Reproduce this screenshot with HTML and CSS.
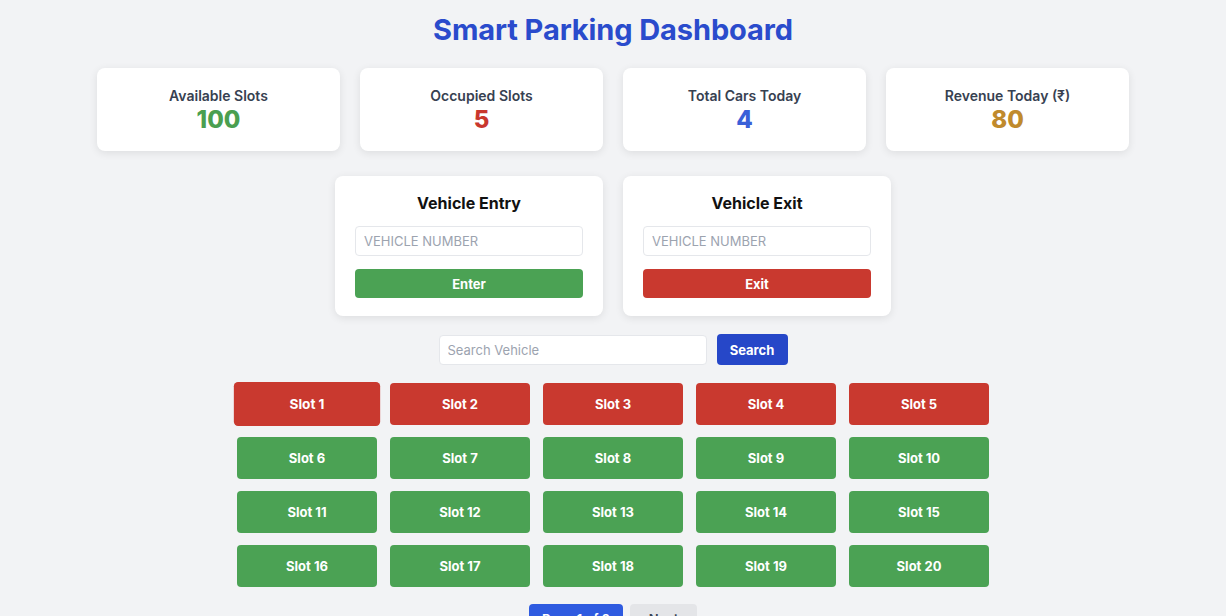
FILE: index.html
```html
<!DOCTYPE html>
<html>
<head>
    <meta name="viewport" charset="utf-8" content="width=device-width, initial-scale=1">
    <title>Smart Parking Dashboard</title>
    <link rel="stylesheet" href="styles.css">
</head>
<body>
<div class="page">
    <h1 class="title">Smart Parking Dashboard</h1>

    <div class="stats">
        <div class="card stat">
            <div class="stat-label">Available Slots</div>
            <div class="stat-value green">100</div>
        </div>
        <div class="card stat">
            <div class="stat-label">Occupied Slots</div>
            <div class="stat-value red">5</div>
        </div>
        <div class="card stat">
            <div class="stat-label">Total Cars Today</div>
            <div class="stat-value blue">4</div>
        </div>
        <div class="card stat">
            <div class="stat-label">Revenue Today (₹)</div>
            <div class="stat-value amber">80</div>
        </div>
    </div>

    <div class="forms">
        <div class="card form">
            <h2 class="form-title">Vehicle Entry</h2>
            <input class="field" type="text" placeholder="VEHICLE NUMBER">
            <button class="btn btn-green">Enter</button>
        </div>
        <div class="card form">
            <h2 class="form-title">Vehicle Exit</h2>
            <input class="field" type="text" placeholder="VEHICLE NUMBER">
            <button class="btn btn-red">Exit</button>
        </div>
    </div>

    <div class="search">
        <input class="field search-field" type="text" placeholder="Search Vehicle">
        <button class="btn btn-blue">Search</button>
    </div>

    <div class="slots">
        <div class="slot occupied hovered">Slot 1</div>
        <div class="slot occupied">Slot 2</div>
        <div class="slot occupied">Slot 3</div>
        <div class="slot occupied">Slot 4</div>
        <div class="slot occupied">Slot 5</div>
        <div class="slot">Slot 6</div>
        <div class="slot">Slot 7</div>
        <div class="slot">Slot 8</div>
        <div class="slot">Slot 9</div>
        <div class="slot">Slot 10</div>
        <div class="slot">Slot 11</div>
        <div class="slot">Slot 12</div>
        <div class="slot">Slot 13</div>
        <div class="slot">Slot 14</div>
        <div class="slot">Slot 15</div>
        <div class="slot">Slot 16</div>
        <div class="slot">Slot 17</div>
        <div class="slot">Slot 18</div>
        <div class="slot">Slot 19</div>
        <div class="slot">Slot 20</div>
    </div>

    <div class="pager">
        <button class="pager-btn current">Page 1 of 2</button>
        <button class="pager-btn">Next</button>
    </div>
</div>
</body>
</html>
```

FILE: styles.css
```css
* { margin: 0; box-sizing: border-box }

body {
    background: #f2f3f5;
    font-family: Inter, "Noto Sans", sans-serif;
    color: #1f2937;
    overflow: hidden;
}

.page {
    padding-top: 12px;
    display: flex;
    flex-direction: column;
    align-items: center;
}

.title {
    font-size: 29px;
    line-height: 36px;
    font-weight: 700;
    color: #2a4bcc;
    letter-spacing: -0.1px;
}

.card {
    background: #fff;
    border-radius: 8px;
    box-shadow: 0 2px 8px rgba(0, 0, 0, .09);
}

/* top counters */
.stats {
    margin-top: 20px;
    display: grid;
    grid-template-columns: repeat(4, 243px);
    gap: 20px;
}

.stat {
    height: 83px;
    padding-top: 18px;
    text-align: center;
}

.stat-label {
    font-size: 14px;
    line-height: 20px;
    font-weight: 600;
    color: #374151;
}

.stat-value {
    font-size: 24px;
    line-height: 28px;
    font-weight: 800;
}

.green { color: #4a9f50 }
.red { color: #c9372e }
.blue { color: #3a60d8 }
.amber { color: #c08a2c }

/* entry / exit */
.forms {
    margin-top: 25px;
    display: flex;
    gap: 20px;
}

.form {
    width: 268px;
    padding: 18px 20px;
    display: flex;
    flex-direction: column;
}

.form-title {
    font-size: 16px;
    line-height: 18px;
    font-weight: 700;
    color: #111;
    text-align: center;
    margin-bottom: 14px;
}

.field {
    height: 30px;
    border: 1px solid #e5e7eb;
    border-radius: 4px;
    padding: 0 8px;
    font-family: inherit;
    font-size: 13px;
    background: #fff;
    outline: none;
}

.field::placeholder { color: #9ca3af }

.btn {
    border: 0;
    border-radius: 4px;
    color: #fff;
    font-family: inherit;
    font-size: 13px;
    font-weight: 700;
}

.form .btn {
    margin-top: 13px;
    height: 29px;
}

.btn-green { background: #4ba254 }
.btn-red { background: #c9392f }
.btn-blue { background: #2647c8 }

/* search */
.search {
    margin-top: 18px;
    display: flex;
    align-items: center;
    gap: 10px;
}

.search-field { width: 268px }

.search .btn {
    width: 71px;
    height: 31px;
}

/* slot grid */
.slots {
    margin-top: 18px;
    display: grid;
    grid-template-columns: repeat(5, 140px);
    column-gap: 13px;
    row-gap: 12px;
}

.slot {
    height: 42px;
    border-radius: 4px;
    background: #4ba254;
    color: #fff;
    font-size: 13px;
    font-weight: 700;
    display: flex;
    align-items: center;
    justify-content: center;
}

.slot.occupied { background: #c9392f }

.slot.hovered { transform: scale(1.045) }

/* pagination */
.pager {
    margin-top: 17px;
    display: flex;
    gap: 7px;
}

.pager-btn {
    height: 30px;
    border: 0;
    border-radius: 4px;
    background: #e4e5e8;
    color: #374151;
    font-family: inherit;
    font-size: 13px;
    font-weight: 600;
    padding: 0 10px;
    min-width: 67px;
    white-space: nowrap;
}

.pager-btn.current {
    background: #2f5be0;
    color: #fff;
    width: 94px;
}
```
